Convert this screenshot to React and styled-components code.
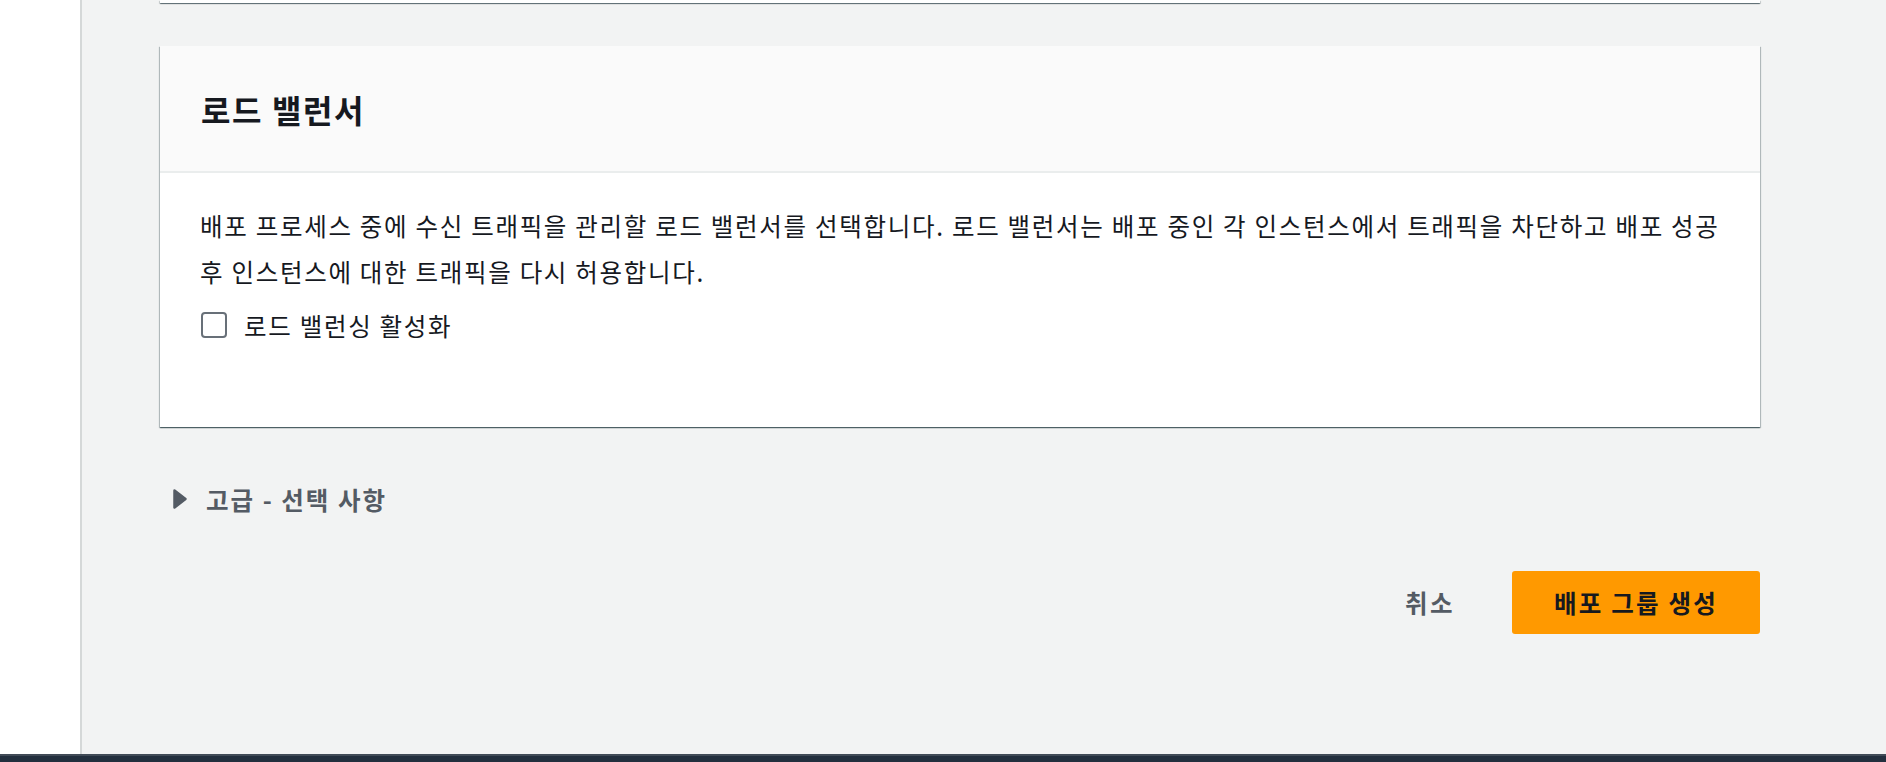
import styled, { createGlobalStyle } from 'styled-components';

const GlobalStyle = createGlobalStyle`
	html, body, #root {
		height: 100%;
		margin: 0;
	}
	body {
		font-family: "Noto Sans CJK KR", "Noto Sans", sans-serif;
		color: #16191f;
		overflow: hidden;
	}
	* {
		box-sizing: border-box;
	}
`;

const Page = styled.div`
	display: flex;
	flex-direction: column;
	height: 100%;
`;

const Body = styled.div`
	flex: 1;
	display: flex;
	min-height: 0;
`;

const Sidebar = styled.aside`
	width: 82px;
	flex-shrink: 0;
	background: #ffffff;
	border-right: 2px solid #d5d8d8;
`;

const Main = styled.main`
	flex: 1;
	min-width: 0;
	background: #f2f3f3;
	padding: 0 126px 0 78px;
	display: flex;
	flex-direction: column;
`;

const CardStub = styled.div`
	height: 3px;
	background: #ffffff;
	box-shadow: 0 1px 1px 0 rgba(0, 28, 36, 0.5), 1px 1px 1px 0 rgba(0, 28, 36, 0.15),
		-1px 1px 1px 0 rgba(0, 28, 36, 0.15);
	margin-bottom: 43px;
`;

const Card = styled.section`
	min-width: 0;
	background: #ffffff;
	box-shadow: 0 1px 1px 0 rgba(0, 28, 36, 0.5), 1px 1px 1px 0 rgba(0, 28, 36, 0.2),
		-1px 1px 1px 0 rgba(0, 28, 36, 0.2);
`;

const CardHeader = styled.header`
	height: 127px;
	display: flex;
	align-items: center;
	padding: 0 40px;
	background: #fafafa;
	border-bottom: 2px solid #eaeded;
`;

const Title = styled.h2`
	margin: 0 0 0 1px;
	font-size: 32px;
	font-weight: 700;
	letter-spacing: 1.6px;
	line-height: 40px;
	color: #16191f;
`;

const CardContent = styled.div`
	padding: 30px 40px 80px;
`;

const Description = styled.p`
	margin: 0;
	font-size: 24.5px;
	line-height: 46px;
	letter-spacing: 1.7px;
	color: #16191f;
	white-space: nowrap;
`;

const CheckRow = styled.label`
	display: flex;
	align-items: center;
	gap: 17px;
	margin-top: 8px;
	height: 44px;
	font-size: 24.5px;
	letter-spacing: 1.7px;
	color: #16191f;
`;

const CheckBox = styled.span`
	width: 26px;
	height: 26px;
	margin-left: 1px;
	border: 2px solid #687078;
	border-radius: 4px;
	background: #ffffff;
	flex-shrink: 0;
`;

const Expander = styled.div`
	display: flex;
	align-items: center;
	gap: 18px;
	margin-top: 50px;
	padding-left: 12px;
	height: 44px;
	font-size: 24.5px;
	font-weight: 700;
	letter-spacing: 2px;
	color: #545b64;
`;

const Actions = styled.div`
	display: flex;
	justify-content: flex-end;
	align-items: center;
	gap: 57px;
	margin-top: 50px;
`;

const LinkButton = styled.button`
	border: none;
	background: none;
	padding: 0;
	font-family: inherit;
	font-size: 24.5px;
	font-weight: 700;
	letter-spacing: 2.5px;
	color: #545b64;
`;

const PrimaryButton = styled.button`
	width: 248px;
	height: 63px;
	border: none;
	border-radius: 3px;
	background: #ff9900;
	font-family: inherit;
	font-size: 24.5px;
	font-weight: 700;
	letter-spacing: 2.2px;
	color: #16191f;
`;

const Footer = styled.footer`
	height: 8px;
	flex-shrink: 0;
	background: #232f3e;
	border-top: 2px solid #414b57;
`;

const Caret = () => (
	<svg width="16" height="22" viewBox="0 0 16 22">
		<path d="M2.5 2.5 L13.5 11 L2.5 19.5 Z" fill="#545b64" stroke="#545b64" strokeWidth="2.5" strokeLinejoin="round" />
	</svg>
);

export default function App() {
	return (
		<Page>
			<GlobalStyle />
			<Body>
				<Sidebar />
				<Main>
					<CardStub />
					<Card>
						<CardHeader>
							<Title>로드 밸런서</Title>
						</CardHeader>
						<CardContent>
							<Description>
								배포 프로세스 중에 수신 트래픽을 관리할 로드 밸런서를 선택합니다. 로드 밸런서는 배포 중인 각
								인스턴스에서 트래픽을 차단하고 배포 성공
								<br />
								후 인스턴스에 대한 트래픽을 다시 허용합니다.
							</Description>
							<CheckRow>
								<CheckBox />
								로드 밸런싱 활성화
							</CheckRow>
						</CardContent>
					</Card>
					<Expander>
						<Caret />
						고급 - 선택 사항
					</Expander>
					<Actions>
						<LinkButton>취소</LinkButton>
						<PrimaryButton>배포 그룹 생성</PrimaryButton>
					</Actions>
				</Main>
			</Body>
			<Footer />
		</Page>
	);
}
